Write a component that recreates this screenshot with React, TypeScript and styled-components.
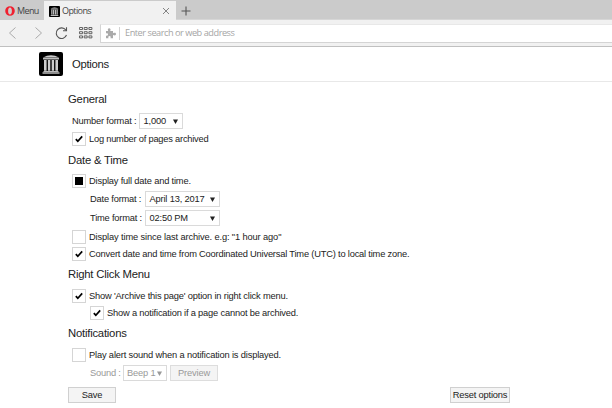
import React from 'react';
import styled, { createGlobalStyle } from 'styled-components';

const GlobalStyle = createGlobalStyle`
  * { box-sizing: border-box; }
  body { margin: 0; background: #fff; overflow: hidden; }
  svg { display: block; flex: none; }
`;

const Page = styled.div`
  width: 612px;
  height: 408px;
  overflow: hidden;
  background: #fff;
  color: #222;
  font: 9.3px/12px 'Liberation Sans', Arial, sans-serif;
  white-space: nowrap;
`;

const TabBar = styled.div`
  display: flex;
  height: 20px;
  background: #cbcbcb;
  font: 9px/12px 'Open Sans', sans-serif;
  letter-spacing: -0.6px;
  color: #444;
`;

const MenuButton = styled.div`
  display: flex;
  align-items: center;
  gap: 2px;
  width: 44px;
  padding: 2px 0 0 5px;
`;

const Tab = styled.div`
  display: flex;
  align-items: center;
  gap: 2px;
  width: 132px;
  margin-top: 1px;
  padding: 1px 6px 0 5px;
  background: #f1f1f1;
`;

const TabTitle = styled.span`
  flex: 1;
`;

const NewTab = styled.div`
  display: flex;
  align-items: center;
  flex: 1;
  padding: 3px 0 0 5px;
  border-bottom: 1px solid #d6d6d6;
`;

const Toolbar = styled.div`
  display: flex;
  align-items: center;
  height: 27px;
  padding: 0 0 0 7px;
  background: #f1f1f1;
  border-bottom: 1px solid #c0c0c0;
`;

const NavIcons = styled.div`
  display: flex;
  align-items: center;
  width: 93px;
`;

const AddressBar = styled.div`
  display: flex;
  align-items: center;
  flex: 1;
  height: 19px;
  padding-left: 4px;
  background: #fff;
  border: 1px solid #d4d4d4;
  border-top-color: #e8e8e8;
  border-right: 0;
  color: #a5a5a5;
  font: 9.2px/12px 'Open Sans', sans-serif;
  letter-spacing: -0.47px;
`;

const Divider = styled.i`
  width: 1px;
  height: 13px;
  margin: 0 5px 0 3px;
  background: #d2d2d2;
`;

const Header = styled.header`
  display: flex;
  align-items: center;
  gap: 9px;
  height: 35px;
  padding-left: 39px;
  border-bottom: 1px solid #e8e8e8;
  font-size: 11.3px;
  letter-spacing: -0.3px;
`;

const Options = styled.main`
  display: flex;
  flex-direction: column;
  padding: 10px 0 0 68px;
`;

const Heading = styled.h2<{ $top?: number }>`
  height: 14px;
  margin: ${p => p.$top ?? 0}px 0 0;
  font-size: 11.3px;
  letter-spacing: -0.22px;
  line-height: 14px;
  font-weight: 400;
`;

const Row = styled.div<{ $top: number; $indent?: number; $muted?: boolean; $height?: number }>`
  display: flex;
  align-items: center;
  height: ${p => p.$height ?? 14}px;
  margin-top: ${p => p.$top}px;
  padding-left: ${p => p.$indent ?? 4}px;
  color: ${p => (p.$muted ? '#999' : 'inherit')};
`;

const Label = styled.span<{ $width?: number; $spacing?: number }>`
  width: ${p => (p.$width ? `${p.$width}px` : 'auto')};
  letter-spacing: ${p => p.$spacing ?? -0.19}px;
`;

const Box = styled.span`
  display: flex;
  align-items: center;
  justify-content: center;
  width: 14px;
  height: 14px;
  margin-right: 3px;
  border: 1px solid #d5d5d5;
`;

const Fill = styled.i`
  width: 8px;
  height: 8px;
  background: #000;
`;

const Select = styled.span<{ $width: number; $pad?: number }>`
  display: flex;
  align-items: center;
  justify-content: space-between;
  width: ${p => p.$width}px;
  height: 16px;
  padding: 0 4px 0 ${p => p.$pad ?? 3.5}px;
  border: 1px solid #dadada;
  font-size: 9.3px;
  letter-spacing: -0.17px;
`;

const Button = styled.button<{ $width: number }>`
  width: ${p => p.$width}px;
  height: 16px;
  padding: 0;
  border: 1px solid #d0d0d0;
  background: #f4f4f4;
  color: #222;
  font: 9.3px/13px 'Liberation Sans', Arial, sans-serif;
  letter-spacing: -0.17px;
  &:disabled { color: #999; margin-left: 3px; border-color: #ddd; }
`;

const Actions = styled.footer`
  display: flex;
  justify-content: space-between;
  width: 442px;
  margin-top: 6px;
`;

const Arrow = () => (
  <svg width="5" height="5" viewBox="0 0 5 5"><path d="M0 .5h5L2.5 5z" fill="currentColor" /></svg>
);

const Check = ({ on }: { on?: boolean }) => (
  <Box>
    {on && (
      <svg width="8" height="8" viewBox="0 0 8 8">
        <path d="M.8 4.2 2.8 6.2 7.2 1.4" fill="none" stroke="#000" strokeWidth="1.7" />
      </svg>
    )}
  </Box>
);

const Archive = ({ size }: { size: number }) => (
  <svg width={size} height={size} viewBox="0 0 24 24">
    <rect width="24" height="24" rx="2" fill="#000" />
    <path d="M4 5.5Q12 1 20 5.5z" fill="#ccc" />
    <path d="M4 5.8h16v1.700H4zM4.500 19h15v1h-15zM3.500 20.300h17v1.400h-17z" fill="#bbb" />
    <path d="M5 8h2.600v10.700H5zM8.900 8h2.400v10.700H8.900zM12.700 8h2.400v10.700h-2.400zM16.400 8H19v10.700h-2.600z" fill="#ccc" />
  </svg>
);

export default function App() {
  return (
    <Page>
      <GlobalStyle />
      <TabBar>
        <MenuButton>
          <svg width="10" height="10" viewBox="0 0 10 10">
            <path
              fillRule="evenodd"
              d="M5 .2a4.800 4.800 0 1 0 0 9.600a4.800 4.800 0 1 0 0-9.600zM5 1.500c1.200 0 1.900 1.500 1.900 3.500S6.200 8.500 5 8.500 3.100 7 3.100 5 3.800 1.500 5 1.500z"
              fill="#f0202f"
            />
          </svg>
          Menu
        </MenuButton>
        <Tab>
          <Archive size={11} />
          <TabTitle>Options</TabTitle>
          <svg width="8" height="8" viewBox="0 0 8 8">
            <path d="m1 1 6 6M7 1 1 7" stroke="#777" strokeWidth=".9" />
          </svg>
        </Tab>
        <NewTab>
          <svg width="10" height="10" viewBox="0 0 10 10">
            <path d="M.5 5h9M5 .5v9" stroke="#555" strokeWidth="1.1" />
          </svg>
        </NewTab>
      </TabBar>
      <Toolbar>
        <NavIcons>
          <svg width="86" height="14" viewBox="0 0 86 14" fill="none">
            <path d="M8.500 1.500 2.500 7l6 5.500M28.500 1.500l6 5.500-6 5.500" stroke="#aaa" />
            <path d="M58.800 4A5.300 5.300 0 1 0 59.500 9M59.500 1.200v3.500H56" stroke="#555" strokeWidth="1.1" />
            <path
              d="M72.500 1.500h3v2h-3zm4.700 0h3v2h-3zm4.700 0h3v2h-3zm-9.400 4.200h3v2h-3zm4.700 0h3v2h-3zm4.700 0h3v2h-3zm-9.400 4.200h3v2h-3zm4.700 0h3v2h-3zm4.700 0h3v2h-3z"
              stroke="#555"
              strokeWidth=".9"
            />
          </svg>
        </NavIcons>
        <AddressBar>
          <svg width="11" height="11" viewBox="0 0 11 11">
            <path
              d="M1 3h2.200C2.400 1 3 .2 4.200.2S6 1.200 5.200 3H8v2.200c1.800-.8 3-.4 3 .9S9.800 7.800 8 7v3.300H5.500C6 8.800 5.500 8 4.500 8S3 8.800 3.500 10.300H1V7.500c1.500.5 2-.2 2-1s-.8-1.500-2-1z"
              fill="#aaa"
            />
          </svg>
          <Divider />
          Enter search or web address
        </AddressBar>
      </Toolbar>
      <Header>
        <Archive size={24} />
        Options
      </Header>
      <Options>
        <Heading>General</Heading>
        <Row $top={7} $height={16}>
          <Label $width={67}>Number format :</Label>
          <Select $width={44}>1,000 <Arrow /></Select>
        </Row>
        <Row $top={3}><Check on /><Label $spacing={-0.22}>Log number of pages archived</Label></Row>
        <Heading $top={7}>Date &amp; Time</Heading>
        <Row $top={7}>
          <Box><Fill /></Box>
          <Label $spacing={-0.17}>Display full date and time.</Label>
        </Row>
        <Row $top={3} $indent={22} $height={16}>
          <Label $width={55}>Date format :</Label>
          <Select $width={75}>April 13, 2017 <Arrow /></Select>
        </Row>
        <Row $top={3} $indent={22} $height={16}>
          <Label $width={55}>Time format :</Label>
          <Select $width={75}>02:50 PM <Arrow /></Select>
        </Row>
        <Row $top={4}><Check /><Label $spacing={-0.13}>Display time since last archive. e.g: "1 hour ago"</Label></Row>
        <Row $top={3}>
          <Check on />
          <Label>Convert date and time from Coordinated Universal Time (UTC) to local time zone.</Label>
        </Row>
        <Heading $top={6}>Right Click Menu</Heading>
        <Row $top={8}><Check on /><Label $spacing={-0.18}>Show 'Archive this page' option in right click menu.</Label></Row>
        <Row $top={3} $indent={22}>
          <Check on />
          <Label $spacing={-0.18}>Show a notification if a page cannot be archived.</Label>
        </Row>
        <Heading $top={6}>Notifications</Heading>
        <Row $top={8}><Check /><Label $spacing={-0.16}>Play alert sound when a notification is displayed.</Label></Row>
        <Row $top={3} $indent={22} $height={16} $muted>
          <Label $width={33}>Sound :</Label>
          <Select $width={44} $pad={3}>Beep 1 <Arrow /></Select>
          <Button $width={48} disabled>Preview</Button>
        </Row>
        <Actions>
          <Button $width={48}>Save</Button>
          <Button $width={60}>Reset options</Button>
        </Actions>
      </Options>
    </Page>
  );
}
